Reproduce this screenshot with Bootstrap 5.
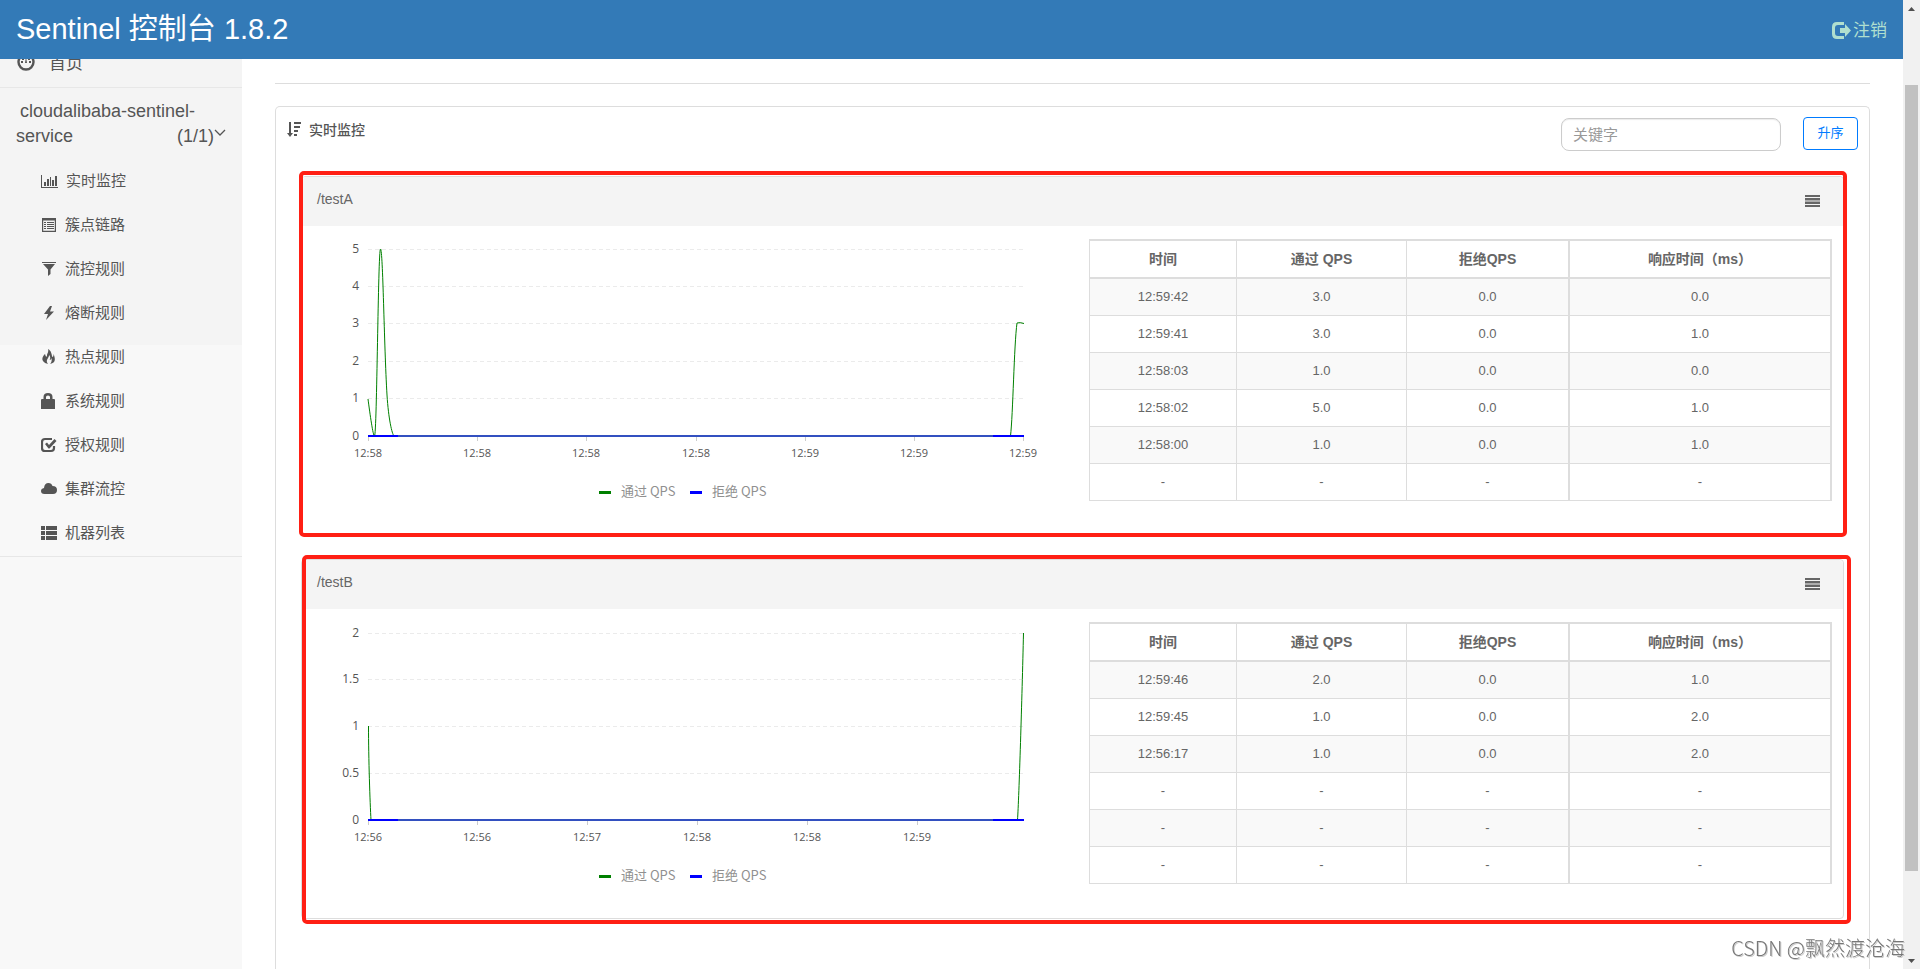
<!DOCTYPE html>
<html lang="zh-CN">
<head>
<meta charset="utf-8">
<meta name="viewport" content="width=device-width, initial-scale=1">
<title>Sentinel 控制台</title>
<link rel="stylesheet" href="https://cdn.jsdelivr.net/npm/bootstrap@5.3.0/dist/css/bootstrap.min.css">
<style>
  body { font-family: "Liberation Sans", "Noto Sans CJK SC", sans-serif; font-size: 14px; line-height: 20px; color: #555; background: #fff; }
  svg { display: block; flex: none; }
  .ico { width: 16px; height: 16px; fill: currentColor; }
  .topbar { height: 59px; background: #337ab7; z-index: 5; padding: 0 16px; }
  .topbar .brand-title { font-size: 29px; line-height: 32px; color: #fff; margin: 0 0 2px; font-weight: 400; }
  .topbar .logout { font-size: 17px; line-height: 24px; color: #b0dfcf; text-decoration: none; gap: 2px; padding-top: 2px; }
  .side { width: 242px; background: linear-gradient(#f4f4f4 286px, #f8f8f8 286px); }
  .side a { color: #555; text-decoration: none; }
  /* the menu is scrolled a little way under the top bar */
  .side-menu { margin-top: -21px; }
  .side-home { height: 50px; padding: 2px 17px 0; gap: 14px; font-size: 17px; border-bottom: 1px solid #e7e7e7; }
  .side-app { padding: 11px 16px 10px 16px; font-size: 18px; line-height: 25px; }
  .side-sub { border-bottom: 1px solid #e7e7e7; padding-bottom: 1px; }
  .side-sub a { height: 44px; padding-left: 41px; gap: 8px; font-size: 15px; }
  .main-col { padding: 24px 33px 0; }
  .main-col hr { margin: 0 0 22px; border-color: #ddd; opacity: 1; }
  .monitor { border-color: #ddd; border-bottom: 0; border-radius: 5px 5px 0 0; }
  .monitor-head { padding: 10px 11px 0; height: 69px; color: #555; }
  .monitor-title { gap: 8px; font-weight: 500; height: 25px; }
  .search-box { width: 220px; height: 33px; font-size: 15px; border: 1px solid #ccc; border-radius: 8px; padding: 0 11px; box-shadow: inset 0 1px 1px rgba(0,0,0,.08); margin-top: 1px; }
  .search-box::placeholder { color: #999; }
  .search-form { gap: 22px; }
  .btn-sort { width: 55px; height: 33px; padding: 0 0 2px; font-size: 13px; line-height: 20px; color: #007bff; border: 1px solid #007bff; border-radius: 4px; background: #fff; }
  .panels { padding: 0 25px; gap: 23px; }
  .res { border-color: #ddd; border-radius: 4px; color: #666; }
  .res::after { content: ""; position: absolute; border: 4px solid #ff1f14; border-radius: 5px; pointer-events: none; }
  .res-a::after { inset: -6px -4px -2px -3px; }
  .res-b::after { inset: -5px -8px -6px 0; }
  .res-head { height: 49px; padding: 0 23px 2px 15px; background: #f4f4f4; border: 0; }
  .res-head .res-name { font-size: 14px; margin-bottom: 4px; }
  .res-body { padding: 0 11px 0 15px; }
  .chart-col { flex: 772 1 0; min-width: 0; }
  .table-col { flex: 743 1 0; min-width: 0; padding-top: 13px; }
  .chart { width: 100%; height: auto; font-family: "Open Sans", "Noto Sans CJK SC", sans-serif; }
  .chart .grid-lines { stroke: #ebebeb; stroke-dasharray: 4 3; fill: none; }
  .chart .ticks { stroke: #ccc; fill: none; }
  .chart .y-labels { font-size: 12px; fill: #555; text-anchor: end; }
  .chart .x-labels { font-size: 11px; fill: #555; text-anchor: middle; }
  .chart .legend-text { font-size: 13px; fill: #909090; font-family: "Noto Sans CJK SC", sans-serif; }
  .qps { table-layout: fixed; margin: 0; text-align: center; border: 1px solid #ddd; border-right-width: 2px; border-top-width: 2px; }
  .qps th, .qps td { border: 1px solid #ddd; padding: 8px 0; font-size: 13px; line-height: 20px; color: #666; }
  .qps th { font-size: 14px; border-bottom-width: 2px; }
  .qps .wide-col { width: 262px; }
  .qps .time-col { width: 147px; }
  .qps .pass-col { width: 170px; }
  .qps tr > :nth-child(4) { border-left-width: 2px; border-right-width: 2px; }
  .qps tbody tr:nth-child(odd) > td { background: #f9f9f9; }
  .rail { width: 17px; background: #f1f1f1; padding: 7px 2px 6px; }
  .rail-thumb { width: 13px; flex: 785; background: #c1c1c1; }
  .credit { position: fixed; right: 15px; bottom: 7px; font: 300 20px/28px "Noto Sans CJK SC", sans-serif; color: #777; text-shadow: 1px 1px 0 #ccc, -1px -1px 0 #fff; z-index: 9; }
</style>
</head>
<body class="d-flex vh-100 overflow-hidden">
<div class="d-flex flex-column flex-grow-1 overflow-hidden">
  <header class="topbar d-flex align-items-center justify-content-between flex-shrink-0">
    <h1 class="brand-title">Sentinel 控制台 1.8.2</h1>
    <a href="#" class="logout d-flex align-items-center">
      <svg width="19" height="17" viewBox="0 0 19 17" fill="currentColor"><path d="M12 0H5Q0 0 0 5v7q0 5 5 5h7v-3H6q-3 0-3-3V6q0-3 3-3h6z"/><path d="M8 6h5V2l6 6.500-6 6.500v-4H8z"/></svg>
      <span>注销</span>
    </a>
  </header>
  <div class="d-flex flex-grow-1 overflow-hidden">
    <nav class="side flex-shrink-0 overflow-hidden">
      <div class="side-menu">
        <a href="#" class="side-home d-flex align-items-center">
          <svg class="mb-1" width="18" height="18" viewBox="0 0 18 18"><circle cx="9" cy="9" r="7.500" fill="none" stroke="currentColor" stroke-width="2.400"/><path d="M8 10l1-6 1 6zM4 8h2v2H4zM12 8h2v2h-2zM5 5h2v2H5zM11 5h2v2h-2z" fill="currentColor"/></svg>
          <span>首页</span>
        </a>
        <a href="#" class="side-app d-block">
          <span class="d-block ps-1">cloudalibaba-sentinel-</span>
          <span class="d-flex"><span class="flex-grow-1">service</span><span>(1/1)</span>
            <svg width="12" height="20" viewBox="0 0 12 20"><path d="M1 6l5 5 5-5" fill="none" stroke="currentColor" stroke-width="1.300"/></svg></span>
        </a>
        <div class="side-sub">
          <a href="#" class="d-flex align-items-center"><svg width="17" height="14" viewBox="0 0 17 14" fill="currentColor"><path d="M0 1h1v12h16v1H0zM3 8h2v4H3zM6 5h2v7H6zM9 3h1v9H9zM11 6h2v6h-2zM14 2h2v10h-2z"/></svg>实时监控</a>
          <a href="#" class="d-flex align-items-center"><svg class="ico" viewBox="0 0 16 16"><path fill-rule="evenodd" d="M1 1h14v14H1zM2.200 3.500v10.300h11.600V3.500z"/><path d="M3 5h2v1H3zM6 5h7v1H6zM3 7h2v1H3zM6 7h7v1H6zM3 9h2v1H3zM6 9h7v1H6zM3 11h2v1H3zM6 11h7v1H6z"/></svg>簇点链路</a>
          <a href="#" class="d-flex align-items-center"><svg class="ico" viewBox="0 0 16 16"><path d="M1 1h14v1H1zM2 3h12L9.500 8.500V13L7 15V8.500z"/></svg>流控规则</a>
          <a href="#" class="d-flex align-items-center"><svg class="ico" viewBox="0 0 16 16"><path d="M9 1L3 9h4l-2 6 8-8.500H9L11 1z"/></svg>熔断规则</a>
          <a href="#" class="d-flex align-items-center"><svg class="ico" viewBox="0 0 16 16"><path d="M7 0c1 3-1 4.500-1 6.500C6 8 5 8 4.700 7L4 5C1 8 .500 11 3 13c1 1 2 1.500 4 2-2-3-1-4 0-6 1-1.500 1-2 1-3 2 2 1 4 .700 5 1 0 1.500-1 1.500-2 1 2 .500 4-1 6 4-1 5-3 4.500-6C13.500 7 13 6 12.500 5c.300 2-.500 3-1.200 3C10.500 5 10.500 2 7 0z"/></svg>热点规则</a>
          <a href="#" class="d-flex align-items-center"><svg class="ico" viewBox="0 0 16 16"><path fill-rule="evenodd" d="M0 7q0-1 1-1h1.500V4Q2.500 0 7 0t4.500 4v2H13q1 0 1 1v9H0zM5 6h4V4q0-1.500-2-1.500T5 4z"/></svg>系统规则</a>
          <a href="#" class="d-flex align-items-center"><svg class="ico" viewBox="0 0 16 16"><path d="M11 2H4Q1 2 1 5v6q0 3 3 3h6q3 0 3-3V9" fill="none" stroke="currentColor" stroke-width="2.200"/><path d="M4 7l2-1.500L8 8l5.500-6L15.500 4 8.500 11.500H7.500z"/></svg>授权规则</a>
          <a href="#" class="d-flex align-items-center"><svg class="ico" viewBox="0 0 16 16"><path d="M3.500 13Q0 13 0 10q0-2.500 3-3Q3.500 2 7.500 2q3 0 4 3 4.500 0 4.500 4t-4 4z"/></svg>集群流控</a>
          <a href="#" class="d-flex align-items-center"><svg class="ico" viewBox="0 0 16 16"><path d="M0 1h4v4H0zM5 1h11v4H5zM0 6h4v4H0zM5 6h11v4H5zM0 11h4v4H0zM5 11h11v4H5z"/></svg>机器列表</a>
        </div>
      </div>
    </nav>
    <main class="main-col d-flex flex-column flex-grow-1 overflow-hidden">
      <hr>
      <section class="monitor card flex-grow-1">
        <div class="monitor-head d-flex justify-content-between align-items-start flex-shrink-0">
          <div class="monitor-title d-flex align-items-center">
            <svg width="14" height="15" viewBox="0 0 14 15" fill="currentColor"><path d="M2 0h2v11h2l-3 4-3-4h2zM7 0h7v2H7zM7 4h6v2H7zM7 8h4v2H7zM7 12h3v2H7z"/></svg>
            <span>实时监控</span>
          </div>
          <form class="search-form d-flex align-items-start" onsubmit="return false">
            <input type="text" class="search-box form-control" placeholder="关键字" aria-label="关键字">
            <button type="button" class="btn btn-sort">升序</button>
          </form>
        </div>
        <div class="panels d-flex flex-column">
          <article class="res res-a card">
            <div class="res-head card-header d-flex align-items-center justify-content-between">
              <span class="res-name">/testA</span>
              <svg width="15" height="12" viewBox="0 0 15 12" fill="currentColor"><path d="M0 0h15v2H0zM0 3h15v2H0zM0 7h15v2H0zM0 10h15v2H0z"/><path d="M0 5h15v2H0z" opacity=".5"/></svg>
            </div>
            <div class="res-body d-flex align-items-start">
              <div class="chart-col">
                <svg class="chart" viewBox="0 0 772 309">
                  <path class="grid-lines" d="M51 23.500H707M51 60.500H707M51 97.500H707M51 135.500H707M51 172.500H707"/>
                  <path class="ticks" d="M51.500 210v5M160.500 210v5M269.500 210v5M379.500 210v5M488.500 210v5M597.500 210v5M706.500 210v5"/>
                  <path d="M51 173C53 188 56 210 57.500 210C60 210 61 23 63.500 23C66 23 67 119 70 169C71.500 193 75 208 77 210H693.500C696 189 697 119 700 97Q703 96 707 97.500" fill="none" stroke="green" stroke-width="1"/>
                  <path d="M51 210H707" stroke="#3350c0" stroke-width="2"/>
                  <path d="M51 210h30M676 210h31" stroke="#00f" stroke-width="2"/>
                  <g class="y-labels"><text x="42" y="27">5</text><text x="42" y="64">4</text><text x="42" y="101">3</text><text x="42" y="139">2</text><text x="42" y="176">1</text><text x="42" y="214">0</text></g>
                  <g class="x-labels"><text x="51" y="231">12:58</text><text x="160" y="231">12:58</text><text x="269" y="231">12:58</text><text x="379" y="231">12:58</text><text x="488" y="231">12:59</text><text x="597" y="231">12:59</text><text x="706" y="231">12:59</text></g>
                  <path d="M282 266.500h12" stroke="green" stroke-width="3"/><text class="legend-text" x="304" y="270">通过 QPS</text>
                  <path d="M373 266.500h12" stroke="#00f" stroke-width="3"/><text class="legend-text" x="395" y="270">拒绝 QPS</text>
                </svg>
              </div>
              <div class="table-col">
                <table class="table qps">
                  <colgroup><col class="time-col"><col class="pass-col"><col><col class="wide-col"></colgroup>
                  <thead><tr><th scope="col">时间</th><th scope="col">通过 QPS</th><th scope="col">拒绝QPS</th><th scope="col">响应时间（ms）</th></tr></thead>
                  <tbody>
                    <tr><td>12:59:42</td><td>3.0</td><td>0.0</td><td>0.0</td></tr>
                    <tr><td>12:59:41</td><td>3.0</td><td>0.0</td><td>1.0</td></tr>
                    <tr><td>12:58:03</td><td>1.0</td><td>0.0</td><td>0.0</td></tr>
                    <tr><td>12:58:02</td><td>5.0</td><td>0.0</td><td>1.0</td></tr>
                    <tr><td>12:58:00</td><td>1.0</td><td>0.0</td><td>1.0</td></tr>
                    <tr><td>-</td><td>-</td><td>-</td><td>-</td></tr>
                  </tbody>
                </table>
              </div>
            </div>
          </article>
          <article class="res res-b card">
            <div class="res-head card-header d-flex align-items-center justify-content-between">
              <span class="res-name">/testB</span>
              <svg width="15" height="12" viewBox="0 0 15 12" fill="currentColor"><path d="M0 0h15v2H0zM0 3h15v2H0zM0 7h15v2H0zM0 10h15v2H0z"/><path d="M0 5h15v2H0z" opacity=".5"/></svg>
            </div>
            <div class="res-body d-flex align-items-start">
              <div class="chart-col">
                <svg class="chart" viewBox="0 0 772 309">
                  <path class="grid-lines" d="M51 24.500H707M51 70.500H707M51 117.500H707M51 164.500H707"/>
                  <path class="ticks" d="M51.500 211v5M160.500 211v5M270.500 211v5M380.500 211v5M490.500 211v5M600.500 211v5"/>
                  <path d="M51.500 117C51.500 149 53 194 54 211H700.500C702 189 705 89 706.500 24" fill="none" stroke="green" stroke-width="1"/>
                  <path d="M51 211H707" stroke="#3350c0" stroke-width="2"/>
                  <path d="M51 211h30M676 211h31" stroke="#00f" stroke-width="2"/>
                  <g class="y-labels"><text x="42" y="28">2</text><text x="42" y="74">1.5</text><text x="42" y="121">1</text><text x="42" y="168">0.5</text><text x="42" y="215">0</text></g>
                  <g class="x-labels"><text x="51" y="232">12:56</text><text x="160" y="232">12:56</text><text x="270" y="232">12:57</text><text x="380" y="232">12:58</text><text x="490" y="232">12:58</text><text x="600" y="232">12:59</text></g>
                  <path d="M282 267.500h12" stroke="green" stroke-width="3"/><text class="legend-text" x="304" y="271">通过 QPS</text>
                  <path d="M373 267.500h12" stroke="#00f" stroke-width="3"/><text class="legend-text" x="395" y="271">拒绝 QPS</text>
                </svg>
              </div>
              <div class="table-col">
                <table class="table qps">
                  <colgroup><col class="time-col"><col class="pass-col"><col><col class="wide-col"></colgroup>
                  <thead><tr><th scope="col">时间</th><th scope="col">通过 QPS</th><th scope="col">拒绝QPS</th><th scope="col">响应时间（ms）</th></tr></thead>
                  <tbody>
                    <tr><td>12:59:46</td><td>2.0</td><td>0.0</td><td>1.0</td></tr>
                    <tr><td>12:59:45</td><td>1.0</td><td>0.0</td><td>2.0</td></tr>
                    <tr><td>12:56:17</td><td>1.0</td><td>0.0</td><td>2.0</td></tr>
                    <tr><td>-</td><td>-</td><td>-</td><td>-</td></tr>
                    <tr><td>-</td><td>-</td><td>-</td><td>-</td></tr>
                    <tr><td>-</td><td>-</td><td>-</td><td>-</td></tr>
                  </tbody>
                </table>
              </div>
            </div>
          </article>
        </div>
      </section>
    </main>
  </div>
</div>
<div class="rail d-flex flex-column align-items-center flex-shrink-0" aria-hidden="true">
  <svg width="7" height="4" viewBox="0 0 7 4"><path d="M0 4L3.500 0 7 4z" fill="#505050"/></svg>
  <div style="flex:74"></div>
  <div class="rail-thumb"></div>
  <div style="flex:88"></div>
  <svg width="7" height="4" viewBox="0 0 7 4"><path d="M0 0h7L3.500 4z" fill="#505050"/></svg>
</div>
<div class="credit">CSDN @飘然渡沧海</div>
<script src="https://cdn.jsdelivr.net/npm/bootstrap@5.3.0/dist/js/bootstrap.bundle.min.js"></script>
</body>
</html>
